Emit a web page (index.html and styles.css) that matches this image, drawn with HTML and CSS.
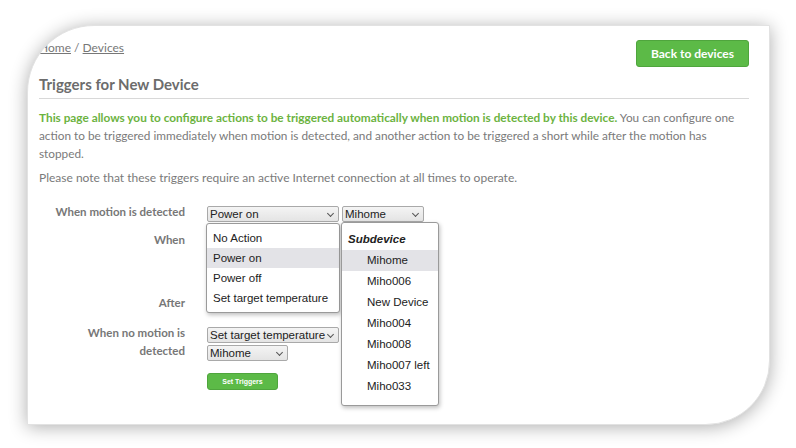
FILE: index.html
```html
<!DOCTYPE html>
<html>
<head>
<meta charset="utf-8">
<link rel="stylesheet" href="styles.css">
</head>
<body>
<div class="stage">
  <div class="card">
    <div class="topbar">
      <div class="crumbs"><a href="#">Home</a> / <a href="#">Devices</a></div>
      <a class="btn-back" href="#">Back to devices</a>
    </div>
    <h1 class="title">Triggers for New Device</h1>
    <p class="intro"><span class="hl">This page allows you to configure actions to be triggered automatically when motion is detected by this device.</span> You can configure one action to be triggered immediately when motion is detected, and another action to be triggered a short while after the motion has stopped.</p>
    <p class="note">Please note that these triggers require an active Internet connection at all times to operate.</p>

    <div class="form">
      <div class="row r1">
        <div class="label">When motion is detected</div>
        <div class="controls">
          <div class="select w132">Power on<span class="chev"></span></div>
          <div class="select w82">Mihome<span class="chev"></span></div>
        </div>
        <ul class="menu menu-action">
          <li>No Action</li>
          <li class="active">Power on</li>
          <li>Power off</li>
          <li>Set target temperature</li>
        </ul>
        <ul class="menu menu-device">
          <li class="group">Subdevice</li>
          <li class="sub active">Mihome</li>
          <li class="sub">Miho006</li>
          <li class="sub">New Device</li>
          <li class="sub">Miho004</li>
          <li class="sub">Miho008</li>
          <li class="sub">Miho007 left</li>
          <li class="sub">Miho033</li>
        </ul>
      </div>
      <div class="row r2">
        <div class="label">When</div>
        <div class="controls">
          <div class="select w132">Immediately<span class="chev"></span></div>
        </div>
      </div>
      <div class="row r3">
        <div class="label">After</div>
        <div class="controls">
          <div class="select w76">1 minute<span class="chev"></span></div>
        </div>
      </div>
      <div class="row r4">
        <div class="label">When no motion is detected</div>
        <div class="controls stack">
          <div class="select w132">Set target temperature<span class="chev"></span></div>
          <div class="select w81">Mihome<span class="chev"></span></div>
        </div>
      </div>
      <div class="row r5">
        <div class="label"></div>
        <div class="controls">
          <a class="btn-set" href="#">Set Triggers</a>
        </div>
      </div>
    </div>
  </div>
</div>
</body>
</html>
```

FILE: styles.css
```css
html, body {
  margin: 0;
  padding: 0;
  background: #ffffff;
}
body {
  width: 796px;
  height: 448px;
  overflow: hidden;
  font-family: "Lato", "Open Sans", sans-serif;
  color: #7a7a7a;
}
.stage {
  padding: 25px 26px 0 27px;
}
.card {
  position: relative;
  width: 743px;
  height: 400px;
  box-sizing: border-box;
  background: #fff;
  border: 1px solid #e2e2e2;
  border-radius: 67px 0 64px 0;
  box-shadow: 0 2px 18px rgba(0,0,0,0.32);
  padding: 14px 20px 0 11px;
  overflow: hidden;
}
.topbar {
  display: flex;
  justify-content: space-between;
  align-items: flex-start;
}
.crumbs {
  margin-top: 0;
  font-size: 12px;
  color: #777;
}
.crumbs a {
  color: #777;
  text-decoration: underline;
}
.btn-back {
  display: block;
  width: 113px;
  height: 27px;
  box-sizing: border-box;
  line-height: 25px;
  text-align: center;
  background: #5cba47;
  border: 1px solid #4fa53d;
  border-radius: 3px;
  color: #fff;
  font-weight: 700;
  font-size: 12px;
  text-decoration: none;
}
.title {
  margin: 8px 0 0;
  padding-bottom: 5px;
  border-bottom: 1px solid #d8d8d8;
  font-size: 15px;
  font-weight: 700;
  color: #6c6c6c;
}
.intro {
  margin: 10px 10px 0 0;
  font-size: 11.8px;
  line-height: 18px;
  color: #7a7a7a;
}
.hl {
  color: #6cb33f;
  font-weight: 700;
}
.note {
  margin: 6px 0 0;
  font-size: 12px;
  line-height: 18px;
}
.form {
  position: relative;
  margin-top: 19px;
}
.row {
  display: flex;
  align-items: flex-start;
}
.row .label {
  width: 136px;
  flex: none;
  text-align: right;
  font-size: 11.5px;
  font-weight: 700;
  color: #777;
  line-height: 18px;
  margin-left: 10px;
  margin-right: 22px;
  margin-top: -3px;
}
.controls {
  display: flex;
  gap: 3px;
}
.controls.stack {
  flex-direction: column;
  gap: 2px;
}
.select {
  position: relative;
  height: 16px;
  box-sizing: border-box;
  border: 1px solid #a9a9a9;
  border-radius: 2px;
  background: linear-gradient(#f4f4f4, #e4e4e4);
  font-family: "Liberation Sans", Arial, sans-serif;
  font-size: 11.5px;
  line-height: 14px;
  color: #222;
  padding-left: 2px;
  white-space: nowrap;
}
.chev {
  position: absolute;
  right: 5px;
  top: 4px;
  width: 4px;
  height: 4px;
  border-right: 1px solid #555;
  border-bottom: 1px solid #555;
  transform: rotate(45deg);
}
.w132 { width: 132px; }
.w82 { width: 82px; }
.w81 { width: 81px; }
.w76 { width: 76px; }
.r1 { height: 16px; }
.r2 { margin-top: 12px; height: 63px; }
.r3 { height: 16px; }
.r4 { margin-top: 14px; }
.r5 { margin-top: 12px; }
.btn-set {
  display: block;
  width: 71px;
  height: 17px;
  box-sizing: border-box;
  background: #5cba47;
  border: 1px solid #4fa53d;
  border-radius: 3px;
  color: #fff;
  font-family: "Liberation Sans", Arial, sans-serif;
  font-size: 7px;
  font-weight: 700;
  line-height: 15px;
  text-align: center;
  text-decoration: none;
}
.menu {
  position: absolute;
  list-style: none;
  margin: 0;
  padding: 0;
  background: #fff;
  border: 1px solid #9a9a9a;
  border-radius: 3px;
  box-shadow: 1px 2px 4px rgba(0,0,0,0.25);
  font-family: "Liberation Sans", Arial, sans-serif;
  font-size: 11.5px;
  color: #222;
  z-index: 2;
}
.menu-action {
  left: 167px;
  top: 17px;
  width: 132px;
  padding: 4px 0 4px;
}
.menu-action li {
  height: 20px;
  line-height: 20px;
  padding-left: 6px;
}
.menu li.active {
  background: #e3e3e7;
}
.menu-device {
  left: 302px;
  top: 16px;
  width: 98px;
  height: 184px;
  box-sizing: border-box;
  padding-top: 6px;
}
.menu-device li {
  height: 21px;
  line-height: 21px;
}
.menu-device li.group {
  font-weight: 700;
  font-style: italic;
  padding-left: 6px;
}
.menu-device li.sub {
  padding-left: 25px;
}
```
